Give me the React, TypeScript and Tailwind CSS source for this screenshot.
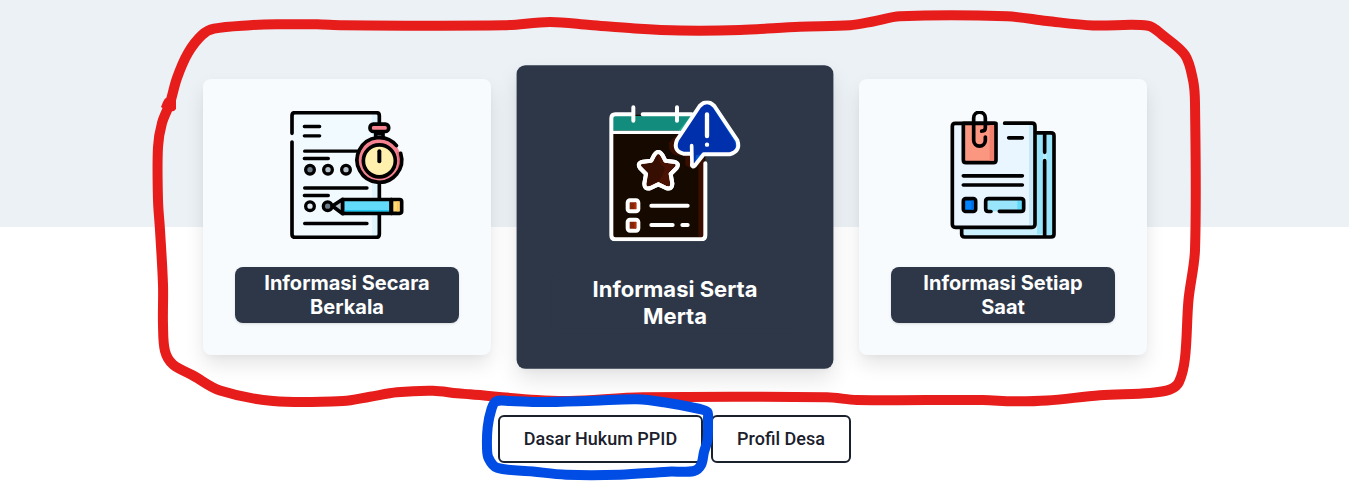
import type { ReactNode } from 'react';

type Point = [number, number];

// Closed Catmull-Rom curve through the given points, as cubic segments.
function smoothPath(points: Point[]): string {
  const n = points.length;
  const at = (i: number): Point => points[(i + n) % n];
  let d = `M${points[0][0]} ${points[0][1]}`;
  for (let i = 0; i < n; i++) {
    const [a, b, c, e] = [at(i - 1), at(i), at(i + 1), at(i + 2)];
    const len = Math.hypot(c[0] - b[0], c[1] - b[1]);
    const t1 = len / (Math.hypot(b[0] - a[0], b[1] - a[1]) + len || 1) / 1.5;
    const t2 = len / (Math.hypot(e[0] - c[0], e[1] - c[1]) + len || 1) / 1.5;
    d += `C${b[0] + ((c[0] - a[0]) * t1) / 2} ${b[1] + ((c[1] - a[1]) * t1) / 2} ${c[0] - ((e[0] - b[0]) * t2) / 2} ${c[1] - ((e[1] - b[1]) * t2) / 2} ${c[0]} ${c[1]}`;
  }
  return d + 'Z';
}

const redMarker: Point[] = [
  [170, 103], [177, 78], [188, 53], [202, 35], [214, 28.7], [250, 25.2], [277, 24.3], [317, 24.3], [343, 25.3],
  [503, 25.3], [550, 22], [590, 25], [635, 28.5], [680, 30.5], [740, 30], [800, 26.7], [850, 25.3], [873, 21.5],
  [900, 16.3], [1007, 16.3], [1047, 21], [1093, 25.5], [1148, 25.7], [1163, 35.5], [1185, 55], [1193, 80],
  [1195, 103], [1195, 250], [1188.5, 300], [1185, 358], [1179, 382], [1170, 389.5], [1150, 393], [1100, 395.3],
  [1047, 400.5], [1013, 401.3], [983, 400], [857, 400], [827, 397.3], [643, 397.3], [570, 401], [537, 400],
  [470, 394.3], [457, 393.3], [433, 390.8], [397, 392.3], [370, 396.7], [343, 401], [273, 401], [220, 390.5],
  [193, 375.5], [173, 364.5], [165, 351], [163, 325], [163, 285], [160, 230], [158, 200], [158, 147], [162, 123],
];

const blueMarker: Point[] = [
  [496, 401.3], [510, 401], [540, 402], [593, 400.7], [637, 399.3], [664, 402.3], [700, 409], [707.5, 412],
  [708, 418], [707.5, 440], [704, 452], [701, 465], [694, 471], [668, 471.7], [620, 474.7], [566, 474.7],
  [533, 471.5], [497, 467.7], [488.5, 458], [487, 447], [487.7, 427], [491.5, 409],
];

function ChecklistIcon() {
  return (
    <svg className="size-32" viewBox="9 33 384 384" fill="none" stroke="#000" strokeWidth="11" strokeLinecap="round" strokeLinejoin="round">
      <path d="M36 38H298V412H36Z" fill="#f1faff" stroke="none" />
      <path d="M276 42H294V408H276Z" fill="#dff4fd" stroke="none" />
      <path d="M36 100V47q0-9 9-9H289q9 0 9 9V70M298 254V294M298 344V402q0 10-9 10H45q-9 0-9-9V126" />
      <path d="M73 79.500H119M73 107.500H119M74 153.500H232M73 175.500H145M74 264H261M73 286.500H145M74 370.500H261" strokeWidth="10" />
      <g fill="#6b7b87" strokeWidth="10">
        <circle cx="90" cy="209" r="13" />
        <circle cx="144" cy="209" r="13" fill="#b4c0ca" />
        <circle cx="198" cy="209" r="13" fill="#b4c0ca" />
        <circle cx="90" cy="318.500" r="13" fill="#dce7ef" />
        <circle cx="143" cy="318.500" r="13" />
      </g>
      <path d="M287 100H309V116H287Z" fill="#76818e" />
      <rect x="270" y="72.500" width="56" height="22" rx="10" fill="#f6838e" />
      <circle cx="298" cy="182.500" r="67" fill="#f5838f" stroke="none" />
      <path d="M350 155q14 40-8 68l-30 22q36-4 46-40 6-28-2-50Z" fill="#e76577" stroke="none" />
      <path d="M349.500 137A67 67 0 1 0 362 160" />
      <circle cx="298" cy="182.500" r="48" fill="#fff0ae" />
      <path d="M298 154V184" strokeWidth="12" />
      <path d="M157 318L188 298V341Z" fill="#bac3ca" />
      <path d="M188 298.500H334V340H188Z" fill="#62daf9" />
      <path d="M194 331H328V334H194Z" fill="#00c3ef" stroke="none" />
      <path d="M334 298.500H359q6 0 6 6V334q0 6-6 6H334Z" fill="#ffda77" />
      <path d="M353 304V334" stroke="#ffc457" strokeWidth="5" strokeLinecap="butt" />
      <path d="M334 298.500V340" />
    </svg>
  );
}

function CalendarAlertIcon() {
  return (
    <svg className="size-32" viewBox="28.8 31.2 422.4 422.4" fill="none" stroke="#fff" strokeWidth="12" strokeLinecap="round" strokeLinejoin="round">
      <path d="M49 74H331V448H49Z" fill="#160a00" stroke="none" />
      <path d="M310 170H328V442H310Z" fill="#390e00" stroke="none" />
      <path d="M249 133q-18 12-27 26q-2 30 21 37l28 3V225q18 12 25 8l34-34V133Z" fill="#390e00" stroke="none" />
      <path d="M53 78H302L270 122H53Z" fill="#128c7d" stroke="none" />
      <path d="M251 122L286 79H312L280 122Z" fill="#1eae99" stroke="none" />
      <path d="M52 127H255" strokeWidth="10" />
      <path d="M331 220V436q0 12-12 12H61q-12 0-12-12V85q0-12 12-12H111M143 73H290" />
      <path d="M115 52V92M246 52V92" />
      <path d="M177 196Q190 176 203 196L211 212L236 215Q255 219 245 234L227 252L232 280Q232 300 213 294L190 283L167 294Q148 300 148 280L153 252L135 234Q125 219 144 215L169 212Z" fill="#4a1203" />
      <path d="M188 193q4 32 21 39-3 31-24 45l-31 11 6-38-22-25 36-8Z" fill="#360f02" stroke="none" />
      <path d="M177 196Q190 176 203 196L211 212L236 215Q255 219 245 234L227 252L232 280Q232 300 213 294L190 283L167 294Q148 300 148 280L153 252L135 234Q125 219 144 215L169 212Z" />
      <rect x="98" y="331" width="32" height="33" rx="7" fill="#842507" />
      <rect x="98" y="389" width="32" height="33" rx="7" fill="#842507" />
      <path d="M118 338H124V357H118ZM118 396H124V415H118Z" fill="#b52d06" stroke="none" />
      <path d="M169 347H278M169 405H233M262 405H278" />
      <path d="M290 190H265Q233 182 246 150L314 48Q336 26 358 48L427 151Q438 184 404 193H326L299 227Q292 233 291 224Z" fill="#0030ab" stroke="none" />
      <path d="M349 46l69 108q10 31-15 34h17q19-7 7-34L364 58q-10-12-19-12ZM303 196L321 193 300 222Z" fill="#0055cd" stroke="none" />
      <path d="M284 191H265Q233 182 246 150L314 48Q336 26 358 48L427 151Q438 184 404 193H326L299 227Q292 233 291 224" />
      <path d="M290 167L291 226" strokeWidth="11" />
      <path d="M336 73V138M336 164H336.100" strokeWidth="13" />
    </svg>
  );
}

function DocumentsIcon() {
  return (
    <svg className="size-32" viewBox="-3 33 384 384" fill="none" stroke="#000" strokeWidth="11" strokeLinecap="round" strokeLinejoin="round">
      <path d="M65 382H291V98H333q9 0 9 9V403q0 8-9 8H74q-9 0-9-9Z" fill="#cbf1ff" stroke="none" />
      <path d="M291 104H309V403H291ZM319 104H336V405H319Z" fill="#99e5fb" stroke="none" />
      <path d="M309 163L319 158V180L309 174Z" fill="#b8edfd" stroke="none" />
      <path d="M65 386V402q0 9 9 9H333q9 0 9-8V107q0-8.500-9-8.500H291M314 101V157M314 182V406" />
      <path d="M37 70H285V382H37Z" fill="#e9f5ff" stroke="none" />
      <path d="M267 75H281V378H267Z" fill="#c7eafb" stroke="none" />
      <path d="M194 69.500H276q9 0 9 9V373q0 9-9 9H46q-9 0-9-9V79q0-9 9-9H164" />
      <path d="M70 70V180q0 8 8 8H160q8 0 8-8V70Z" fill="#fb9681" />
      <path d="M149 75H162V182H149Z" fill="#ee806d" stroke="none" />
      <path d="M125 93.500q11 0 11-10V54a17.500 17.500 0 0 0-35 0V121a17.500 17.500 0 0 0 35 0V111" />
      <path d="M206 113.500H247M70 227.500H247M70 255H247" />
      <rect x="70" y="296" width="37" height="38.500" rx="7" fill="#0084ff" />
      <path d="M94 302H101V328H94Z" fill="#0069df" stroke="none" />
      <path d="M137 296H251V334H137Z" fill="#99e5fb" stroke="none" />
      <path d="M232 301H246V329H232Z" fill="#62daf9" stroke="none" />
      <path d="M153 334.500H145q-8 0-8-8V304q0-8 8-8H243q8 0 8 8V326q0 8-8 8H178" />
    </svg>
  );
}

function InfoCard({ title, icon, featured = false }: { title: string; icon: ReactNode; featured?: boolean }) {
  return (
    <article
      className={`flex h-[276px] w-72 flex-col items-center rounded-lg p-8 shadow-[0_10px_20px_-1px_rgba(0,0,0,0.11),0_3px_6px_-2px_rgba(0,0,0,0.04)] ${
        featured ? 'scale-110 bg-[#2d3748]' : 'bg-[#f7fbfe]'
      }`}
    >
      {icon}
      <h2
        className={`mt-7 w-56 rounded-lg bg-[#2d3748] px-6 py-1 text-center text-xl leading-6 font-bold text-white ${
          featured ? '' : 'shadow-sm'
        }`}
      >
        {title}
      </h2>
    </article>
  );
}

export default function App() {
  return (
    <main className="relative h-[502px] w-[1349px] overflow-hidden bg-[linear-gradient(to_bottom,#ecf1f6_227px,#ffffff_227px)] font-['Inter',sans-serif]">
      <section className="flex gap-10 pt-[79px] pl-[203px]">
        <InfoCard title="Informasi Secara Berkala" icon={<ChecklistIcon />} />
        <InfoCard title="Informasi Serta Merta" icon={<CalendarAlertIcon />} featured />
        <InfoCard title="Informasi Setiap Saat" icon={<DocumentsIcon />} />
      </section>
      <nav className="mt-[60px] flex justify-center gap-2 font-['Roboto',sans-serif] text-lg font-medium text-[#1a202c]">
        <button className="h-12 w-[205px] rounded-md border-2 border-[#1a202c] bg-white whitespace-nowrap">Dasar Hukum PPID</button>
        <button className="h-12 w-[140px] rounded-md border-2 border-[#1a202c] bg-white whitespace-nowrap">Profil Desa</button>
      </nav>
      <svg className="pointer-events-none absolute inset-0 h-[502px] w-[1349px]" viewBox="0 0 1349 502" fill="none" strokeWidth="10" strokeLinejoin="round" strokeLinecap="round">
        <g stroke="#e71d1c">
          <path d={smoothPath(redMarker)} />
          <path d="M163 102L165 98.500L170 97L176 100V109L174 111L168 112L161 107Z" fill="#e71d1c" stroke="none" />
        </g>
        <path d={smoothPath(blueMarker)} stroke="#004de6" />
      </svg>
    </main>
  );
}
